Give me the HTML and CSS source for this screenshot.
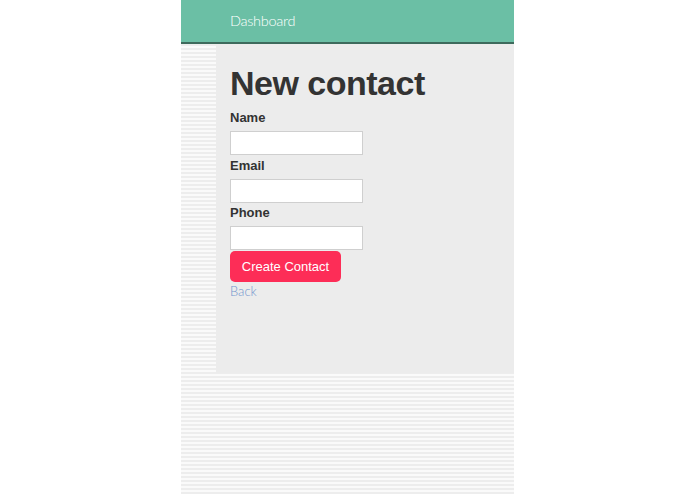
FILE: index.html
```html
<!DOCTYPE html>
<html>
<head>
<meta charset="utf-8">
<link rel="stylesheet" href="styles.css">
</head>
<body>
<div class="app">
  <header class="topbar"><a class="brand" href="#">Dashboard</a></header>
  <main class="panel">
    <h1 class="title">New contact</h1>
    <form class="form">
      <div class="field"><label class="label">Name</label><input class="input" type="text"></div>
      <div class="field"><label class="label">Email</label><input class="input" type="text"></div>
      <div class="field"><label class="label">Phone</label><input class="input" type="text"></div>
      <button class="btn" type="button">Create Contact</button>
    </form>
    <a class="back" href="#">Back</a>
  </main>
</div>
</body>
</html>
```
FILE: styles.css
```css
html, body { margin: 0; padding: 0; background: #ffffff; }
body { font-family: "Liberation Sans", Arial, sans-serif; color: #333; }
.app {
  width: 333px;
  margin: 0 auto;
  min-height: 494px;
  background: repeating-linear-gradient(to bottom, #ededed 0, #ededed 2px, #fafafa 2px, #fafafa 4px);
}
.topbar {
  background: #6bbfa5;
  border-bottom: 2px solid #3e6a5c;
  display: flex;
  align-items: center;
  padding-left: 49px;
  padding-bottom: 2px;
  box-sizing: border-box;
  height: 44px;
}
.brand {
  color: #ffffff;
  text-decoration: none;
  font-family: "Lato", "Liberation Sans", sans-serif;
  font-weight: 300;
  font-size: 14.5px;
  letter-spacing: -0.3px;
}
.panel {
  margin-left: 35px;
  height: 329px;
  box-sizing: border-box;
  background: #ececec;
  padding: 19px 14px 0;
}
.title {
  margin: 0;
  font-size: 34px;
  line-height: 40px;
  font-weight: bold;
  letter-spacing: -0.5px;
  color: #333;
}
.form { display: flex; flex-direction: column; align-items: flex-start; margin-top: 5px; }
.field { display: flex; flex-direction: column; align-items: flex-start; }
.label { font-size: 13px; font-weight: bold; line-height: 20px; margin-bottom: 3px; color: #333; }
.field + .field { margin-top: 0.5px; }
.input {
  width: 133px;
  height: 24px;
  box-sizing: border-box;
  border: 1px solid #cfcfcf;
  background: #fff;
  margin: 0;
  padding: 0 4px;
}
.btn {
  height: 31px;
  width: 111px;
  border: none;
  border-radius: 5px;
  background: #fd2d57;
  color: #fff;
  font-family: "Liberation Sans", Arial, sans-serif;
  font-size: 13px;
  padding: 0;
  margin-top: 1px;
}
.back {
  display: inline-block;
  margin-top: 0;
  font-family: "Lato", "Liberation Sans", sans-serif;
  font-weight: 300;
  font-size: 13px;
  color: #7294cc;
  text-decoration: none;
}
```
